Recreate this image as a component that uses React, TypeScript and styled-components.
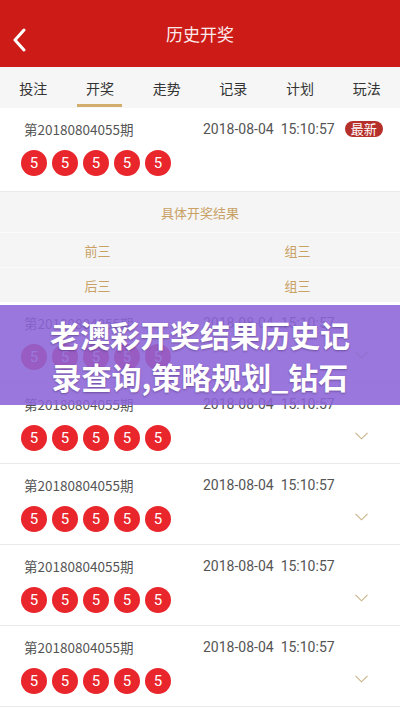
import React, { FC } from 'react'
import styled, { createGlobalStyle } from 'styled-components'

const GlobalStyle = createGlobalStyle`
  html, body {
    margin: 0;
    padding: 0;
    background: #fff;
    font-family: Roboto, 'Noto Sans CJK SC', sans-serif;
    overflow: hidden;
  }
`

const Page = styled.div`
  position: relative;
  width: 400px;
  height: 711px;
  overflow: hidden;
  background: #fff;
`

const Header = styled.div`
  height: 67px;
  background: #cd1c17;
  display: flex;
  align-items: center;
  justify-content: center;
  position: relative;
`

const BackButton = styled.div`
  position: absolute;
  left: 10px;
  top: 26px;
  width: 20px;
  height: 28px;
  display: flex;
  align-items: center;
  justify-content: center;
`

const Title = styled.div`
  color: #fbeaea;
  font-size: 17px;
  font-family: 'Noto Sans CJK SC', sans-serif;
`

const Tabs = styled.div`
  height: 41px;
  background: #f6f6f6;
  display: grid;
  grid-template-columns: repeat(6, 1fr);
`

const Tab = styled.div<{ active?: boolean }>`
  position: relative;
  display: flex;
  align-items: center;
  justify-content: center;
  font-size: 14px;
  color: #333;
  font-family: 'Noto Sans CJK SC', sans-serif;

  &::after {
    content: '';
    display: ${(props) => (props.active ? 'block' : 'none')};
    position: absolute;
    bottom: 1px;
    left: 10px;
    right: 11px;
    height: 3px;
    background: #d2ad6c;
  }
`

const Row = styled.div<{ latest?: boolean }>`
  padding: 10px 24px ${(props) => (props.latest ? '15px' : '12px')} 24px;
  border-bottom: 1px solid #e9e9e9;
  display: flex;
  flex-direction: column;
  gap: 11px;
`

const Meta = styled.div`
  display: flex;
  align-items: center;
  height: 21px;
  font-size: 14px;
  color: #555;
  white-space: nowrap;
`

const Issue = styled.div`
  width: 179px;
  flex-shrink: 0;
  font-family: 'Noto Sans CJK SC', sans-serif;
  font-size: 13.5px;
`

const DateText = styled.div`
  white-space: pre;
  flex-shrink: 0;
  color: #555;
`

const Badge = styled.div`
  margin-left: 10px;
  flex-shrink: 0;
  white-space: nowrap;
  background: #b5302a;
  color: #fff;
  font-size: 13px;
  font-family: 'Noto Sans CJK SC', sans-serif;
  height: 16px;
  line-height: 16px;
  padding: 0 6px;
  border-radius: 8px;
`

const BallLine = styled.div`
  display: flex;
  align-items: center;
  margin-left: -3px;
  gap: 5px;
`

const Ball = styled.div`
  width: 26px;
  height: 26px;
  border-radius: 50%;
  background: #e8262b;
  color: #fff;
  font-size: 15px;
  display: flex;
  align-items: center;
  justify-content: center;
`

const Chevron = styled.div`
  margin-left: auto;
  margin-right: 8px;
  display: flex;
  align-items: center;
  margin-top: -4px;
`

const Detail = styled.div`
  background: #f5f5f5;
  color: #c9a165;
  font-family: 'Noto Sans CJK SC', sans-serif;
  font-size: 13px;
`

const DetailHead = styled.div`
  height: 40px;
  display: flex;
  align-items: center;
  justify-content: center;
`

const DetailRow = styled.div`
  height: 34px;
  display: grid;
  grid-template-columns: 195px 1fr;
  align-items: center;
  border-top: 1px solid #fbfbfb;
  text-align: center;
`

const Overlay = styled.div`
  position: absolute;
  left: 0;
  right: 0;
  top: 305px;
  height: 100px;
  background: rgba(140, 100, 215, 0.88);
  display: flex;
  flex-direction: column;
  align-items: center;
  justify-content: center;
  color: #fff;
  font-family: 'Noto Sans CJK SC', sans-serif;
  font-weight: 700;
  font-size: 30px;
  line-height: 42px;
  text-shadow: 0 1px 2px rgba(60, 30, 90, 0.45);
`

const OverlayLine = styled.div`
  white-space: nowrap;
`

const balls = [5, 5, 5, 5, 5]

const Draw: FC<{ latest?: boolean }> = ({ latest }) => (
  <Row latest={latest}>
    <Meta>
      <Issue>第20180804055期</Issue>
      <DateText>{'2018-08-04  15:10:57'}</DateText>
      {latest && <Badge>最新</Badge>}
    </Meta>
    <BallLine>
      {balls.map((b, i) => (
        <Ball key={i}>{b}</Ball>
      ))}
      {!latest && (
        <Chevron>
          <svg width="13" height="8" viewBox="0 0 13 8">
            <polyline points="0.5,0.8 6.5,6.8 12.5,0.8" fill="none" stroke="#c8b285" strokeWidth="1.1" />
          </svg>
        </Chevron>
      )}
    </BallLine>
  </Row>
)

const tabs = ['投注', '开奖', '走势', '记录', '计划', '玩法']

const App: FC = () => {
  return (
    <Page>
      <GlobalStyle />
      <Header>
        <BackButton>
          <svg width="14" height="24" viewBox="0 0 14 24">
            <polyline points="11,2 2,12 11,22" fill="none" stroke="#fff" strokeWidth="3" strokeLinecap="round" strokeLinejoin="round" />
          </svg>
        </BackButton>
        <Title>历史开奖</Title>
      </Header>
      <Tabs>
        {tabs.map((t) => (
          <Tab key={t} active={t === '开奖'}>
            {t}
          </Tab>
        ))}
      </Tabs>
      <Draw latest />
      <Detail>
        <DetailHead>具体开奖结果</DetailHead>
        <DetailRow>
          <span>前三</span>
          <span>组三</span>
        </DetailRow>
        <DetailRow>
          <span>后三</span>
          <span>组三</span>
        </DetailRow>
      </Detail>
      <Draw />
      <Draw />
      <Draw />
      <Draw />
      <Draw />
      <Overlay>
        <OverlayLine>老澳彩开奖结果历史记</OverlayLine>
        <OverlayLine>录查询,策略规划_钻石</OverlayLine>
      </Overlay>
    </Page>
  )
}

export default App
